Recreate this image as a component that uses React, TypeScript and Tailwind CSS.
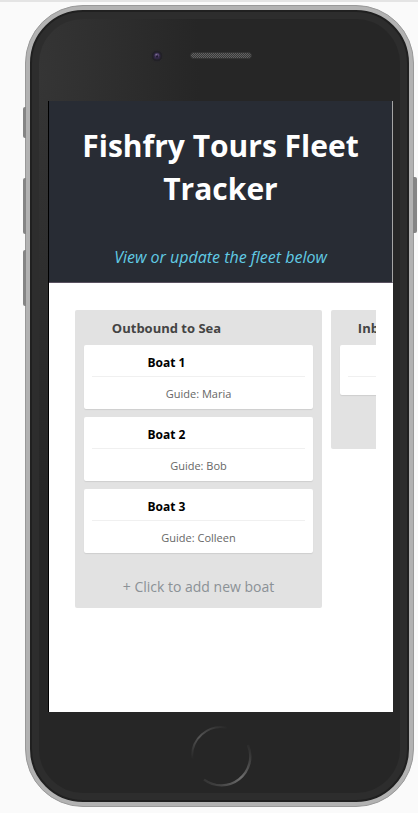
type Boat = { title: string; guide: string };

type Lane = { name: string; boats: Boat[]; adding: boolean };

const lanes: Lane[] = [
  {
    name: 'Outbound to Sea',
    adding: true,
    boats: [
      { title: 'Boat 1', guide: 'Guide: Maria' },
      { title: 'Boat 2', guide: 'Guide: Bob' },
      { title: 'Boat 3', guide: 'Guide: Colleen' },
    ],
  },
  { name: 'Inbound to Harbour', adding: false, boats: [{ title: '', guide: '' }] },
];

function BoatCard({ boat }: { boat: Boat }) {
  return (
    <article className="rounded-[2px] bg-white px-2 shadow-[0_1px_1px_#cfcfcf]">
      <h3 className="h-8 border-b border-[#f0f0f0] pr-16 text-center text-[12px] leading-9 font-bold text-black">
        {boat.title}
      </h3>
      <p className={`text-center text-[11px] text-[#666] ${boat.guide ? 'h-8 leading-[34px]' : 'h-[18px]'}`}>
        {boat.guide}
      </p>
    </article>
  );
}

function LaneColumn({ lane }: { lane: Lane }) {
  return (
    <section className="w-[247px] shrink-0 rounded-[2px] bg-[#e2e2e2] px-[9px]">
      <h2 className="h-[35px] pr-16 text-center text-[13px] leading-9 font-bold whitespace-nowrap text-[#444]">
        {lane.name}
      </h2>
      <div className="flex flex-col gap-2">
        {lane.boats.map((boat, i) => (
          <BoatCard key={i} boat={boat} />
        ))}
      </div>
      {lane.adding ? (
        <button className="block h-[55px] w-full pt-3 text-center text-sm text-[#8b9196]">+ Click to add new boat</button>
      ) : (
        <div className="h-[54px]" />
      )}
    </section>
  );
}

function HomeButton() {
  return (
    <svg width="62" height="62" viewBox="0 0 62 62" fill="none" aria-hidden="true">
      <defs>
        <linearGradient id="upper" x1="3" y1="42" x2="38" y2="2" gradientUnits="userSpaceOnUse">
          <stop offset="0.1" stopColor="#555" stopOpacity="0" />
          <stop offset="0.5" stopColor="#555" />
          <stop offset="1" stopColor="#555" stopOpacity="0" />
        </linearGradient>
        <linearGradient id="lower" x1="14" y1="56" x2="58" y2="16" gradientUnits="userSpaceOnUse">
          <stop offset="0" stopColor="#6a6a6a" stopOpacity="0.2" />
          <stop offset="0.5" stopColor="#6e6e6e" />
          <stop offset="1" stopColor="#666" stopOpacity="0" />
        </linearGradient>
      </defs>
      <path d="M2.3 34A29 29 0 0 1 37 2.6" stroke="url(#upper)" strokeWidth="2" />
      <path d="M14 54.6A29 29 0 0 0 58 20" stroke="url(#lower)" strokeWidth="2.4" />
    </svg>
  );
}

function Earpiece() {
  return (
    <svg width="62" height="8" viewBox="0 0 62 8" aria-hidden="true">
      <defs>
        <pattern id="mesh" width="2" height="2" patternUnits="userSpaceOnUse">
          <rect width="2" height="2" fill="#383838" />
          <rect width="1" height="1" fill="#626262" />
          <rect x="1" y="1" width="1" height="1" fill="#626262" />
        </pattern>
      </defs>
      <rect x="0.5" y="0.5" width="61" height="6" rx="3" fill="url(#mesh)" stroke="#333" />
    </svg>
  );
}

function Camera() {
  return (
    <svg width="14" height="14" viewBox="0 0 14 14" aria-hidden="true">
      <circle cx="7" cy="7" r="5.8" fill="#222126" stroke="#2a292c" />
      <circle cx="7" cy="7" r="3.5" fill="#302744" />
      <circle cx="7" cy="6.5" r="2.3" fill="#57486f" />
      <circle cx="7" cy="7.5" r="1.3" fill="#211a31" />
      <circle cx="6.3" cy="5.7" r="0.7" fill="#85779a" />
    </svg>
  );
}

export default function App() {
  return (
    <div className="border-t-2 border-[#e4e4e4] bg-[#fafafa] pt-[3px] pr-1 pb-[6px] pl-[25px] font-['Open_Sans','Noto_Sans',sans-serif]">
      <div className="relative rounded-[58px] border border-[#999] bg-[#b2b2b2] p-1">
        <span className="absolute top-[101px] -left-[3px] h-[31px] w-[3px] rounded-l-[2px] bg-[#858585]" />
        <span className="absolute top-[172px] -left-[3px] h-14 w-[3px] rounded-l-[2px] bg-[#858585]" />
        <span className="absolute top-[244px] -left-[3px] h-14 w-[3px] rounded-l-[2px] bg-[#858585]" />
        <span className="absolute top-[171px] -right-1 h-14 w-1 rounded-r-[2px] bg-[#858585]" />
        <div className="rounded-[53px] border-2 border-[#202020] bg-[#2d2d2d] p-[7px]">
          <div className="rounded-[44px] bg-[#262626] bg-[radial-gradient(ellipse_160px_420px_at_0_60px,#353535,#262626)] pr-[7px] pl-[9px]">
            <div className="grid h-[82px] grid-cols-[1fr_62px_1fr] items-center pb-2">
              <div className="flex justify-end pr-[26px]">
                <Camera />
              </div>
              <Earpiece />
            </div>
            <main className="min-h-[611px] border-l border-black bg-white">
              <header className="border-r border-b border-r-[#a5a5a5] border-b-[#595160] bg-[#282c34] px-5 pt-[23px] pb-[11px] text-center">
                <h1 className="text-[30px] leading-[43px] font-bold text-white">Fishfry Tours Fleet Tracker</h1>
                <p className="pt-[33px] text-[16px] leading-7 text-[#61cbe5] italic">View or update the fleet below</p>
              </header>
              <div className="mx-[17px] flex items-start gap-[9px] overflow-hidden pt-[27px] pl-[9px]">
                {lanes.map((lane) => (
                  <LaneColumn key={lane.name} lane={lane} />
                ))}
              </div>
            </main>
            <footer className="flex h-[81px] justify-center pt-[13px]">
              <button aria-label="Home" className="h-[62px] w-[62px] rounded-full">
                <HomeButton />
              </button>
            </footer>
          </div>
        </div>
      </div>
    </div>
  );
}
